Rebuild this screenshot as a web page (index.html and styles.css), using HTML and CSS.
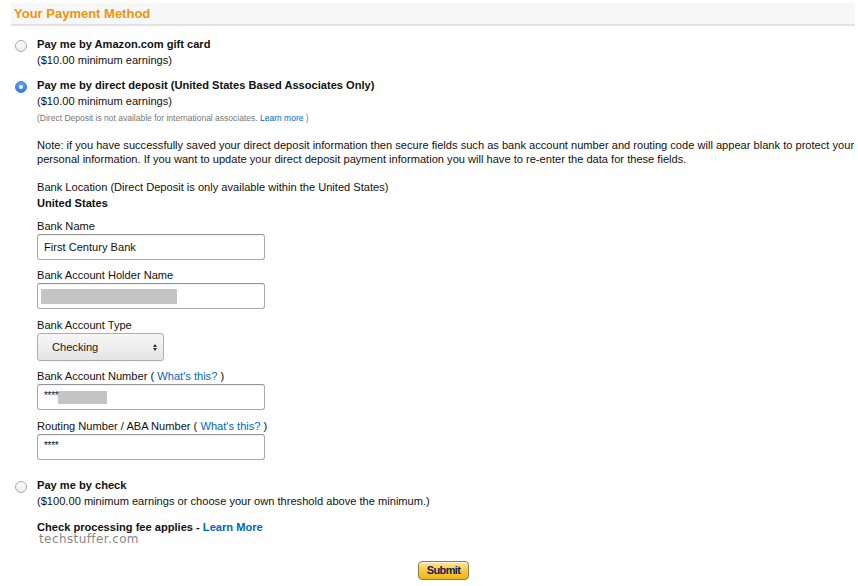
FILE: index.html
```html
<!DOCTYPE html>
<html>
<head>
<meta charset="utf-8">
<link rel="stylesheet" href="styles.css">
</head>
<body>
<div class="page">
  <div class="header"><span class="title">Your Payment Method</span></div>

  <div class="option opt-first">
    <span class="radio"></span>
    <div class="opt-body">
      <div class="opt-title">Pay me by Amazon.com gift card</div>
      <div class="line">($10.00 minimum earnings)</div>
    </div>
  </div>

  <div class="option opt-second">
    <span class="radio checked"></span>
    <div class="opt-body">
      <div class="opt-title">Pay me by direct deposit (United States Based Associates Only)</div>
      <div class="line">($10.00 minimum earnings)</div>
      <div class="small-note">(Direct Deposit is not available for international associates. <a class="link">Learn more</a> )</div>
      <p class="note">Note: if you have successfully saved your direct deposit information then secure fields such as bank account number and routing code will appear blank to protect your<br>personal information. If you want to update your direct deposit payment information you will have to re-enter the data for these fields.</p>
      <div class="location">
        <div class="line">Bank Location (Direct Deposit is only available within the United States)</div>
        <div class="line bold">United States</div>
      </div>
      <div class="field">
        <div class="label">Bank Name</div>
        <div class="input">First Century Bank</div>
      </div>
      <div class="field">
        <div class="label">Bank Account Holder Name</div>
        <div class="input"><span class="redact redact-name"></span></div>
      </div>
      <div class="field field-loose">
        <div class="label">Bank Account Type</div>
        <div class="select"><span>Checking</span><span class="arrows"><i class="up"></i><i class="down"></i></span></div>
      </div>
      <div class="field">
        <div class="label">Bank Account Number ( <a class="link">What's this?</a> )</div>
        <div class="input"><span class="stars">****</span><span class="redact redact-num"></span></div>
      </div>
      <div class="field field-loose">
        <div class="label">Routing Number / ABA Number ( <a class="link">What's this?</a> )</div>
        <div class="input"><span class="stars">****</span></div>
      </div>
    </div>
  </div>

  <div class="option opt-third">
    <span class="radio"></span>
    <div class="opt-body">
      <div class="opt-title">Pay me by check</div>
      <div class="line">($100.00 minimum earnings or choose your own threshold above the minimum.)</div>
      <div class="fee">Check processing fee applies - <a class="link">Learn More</a></div>
      <div class="watermark">techstuffer.com</div>
    </div>
  </div>

  <div class="actions">
    <button class="submit">Submit</button>
  </div>
</div>
</body>
</html>
```
FILE: styles.css
```css
html, body {
  margin: 0;
  padding: 0;
  background: #fff;
}
body {
  font-family: "Liberation Sans", Arial, sans-serif;
  font-size: 11.1px;
  color: #111;
}
.page {
  padding-top: 3px;
}
.header {
  margin: 0 3px 0 11px;
  height: 21px;
  background: #f7f7f7;
  border-bottom: 2px solid #e2e2e2;
  padding-left: 3px;
  line-height: 21px;
}
.title {
  color: #f0940a;
  font-weight: bold;
  font-size: 13px;
}
.option {
  display: flex;
  align-items: flex-start;
  padding-left: 15px;
}
.opt-first { margin-top: 10px; }
.opt-second { margin-top: 9px; }
.opt-third { margin-top: 17px; }
.radio {
  flex: none;
  width: 10px;
  height: 10px;
  margin-top: 4px;
  border: 1px solid #a9a9a9;
  border-radius: 50%;
  background: linear-gradient(#ffffff, #ececec);
  position: relative;
}
.radio.checked {
  border-color: #2f7fe6;
  background: linear-gradient(#5aa2f7, #2c7ce8);
}
.radio.checked::after {
  content: "";
  position: absolute;
  left: 3px;
  top: 3px;
  width: 4px;
  height: 4px;
  border-radius: 50%;
  background: #fff;
}
.opt-body {
  margin-left: 10px;
  flex: 1;
}
.opt-title {
  font-weight: bold;
  line-height: 16px;
}
.line {
  line-height: 16px;
}
.bold { font-weight: bold; }
.small-note {
  margin-top: 3px;
  font-size: 8.5px;
  line-height: 12px;
  color: #777;
}
.link {
  color: #0066c0;
  text-decoration: none;
}
.note {
  margin: 14px 0 0;
  line-height: 14px;
  white-space: nowrap;
}
.location {
  margin-top: 13px;
}
.field {
  margin-top: 7px;
}
.field-loose {
  margin-top: 8px;
}
.label {
  line-height: 16px;
}
.input {
  box-sizing: border-box;
  width: 228px;
  height: 26px;
  border: 1px solid #a9a9a9;
  border-top-color: #949494;
  border-radius: 3px;
  box-shadow: inset 0 1px 1px rgba(0,0,0,0.06);
  padding-left: 6px;
  display: flex;
  align-items: center;
  background: #fff;
}
.redact {
  display: block;
  background: #c4c4c4;
}
.redact-name {
  width: 136px;
  height: 15px;
  margin-left: -3px;
}
.redact-num {
  width: 49px;
  height: 13px;
}
.stars {
  font-size: 10px;
  letter-spacing: -0.3px;
  position: relative;
  top: -2px;
}
.select {
  box-sizing: border-box;
  width: 127px;
  height: 28px;
  border: 1px solid #adadad;
  border-radius: 3px;
  background: linear-gradient(#f7f7f7, #e4e4e4);
  box-shadow: 0 1px 0 rgba(0,0,0,0.05);
  display: flex;
  align-items: center;
  justify-content: space-between;
  padding: 0 6px 0 14px;
  color: #222;
}
.arrows {
  display: flex;
  flex-direction: column;
  gap: 1px;
}
.arrows i {
  display: block;
  width: 0;
  height: 0;
  border-left: 2px solid transparent;
  border-right: 2px solid transparent;
}
.arrows .up { border-bottom: 3px solid #333; }
.arrows .down { border-top: 3px solid #333; }
.fee {
  margin-top: 10px;
  line-height: 16px;
  font-weight: bold;
}
.watermark {
  margin-top: -2px;
  margin-left: 2px;
  font-family: "DejaVu Sans", sans-serif;
  font-size: 12px;
  line-height: 12px;
  color: #888;
  letter-spacing: 0.4px;
}
.actions {
  padding-left: 418px;
  margin-top: 16px;
}
.submit {
  box-sizing: border-box;
  width: 51px;
  height: 19px;
  padding: 0;
  border: 1px solid #8d7c4c;
  border-radius: 4px;
  background: linear-gradient(#fde9a0 0%, #f7cc45 45%, #edb51c 100%);
  box-shadow: inset 0 1px 0 rgba(255,255,255,0.6);
  color: #151a52;
  font-family: "Liberation Sans", Arial, sans-serif;
  font-size: 11px;
  font-weight: bold;
  letter-spacing: -0.6px;
  line-height: 17px;
}
```
